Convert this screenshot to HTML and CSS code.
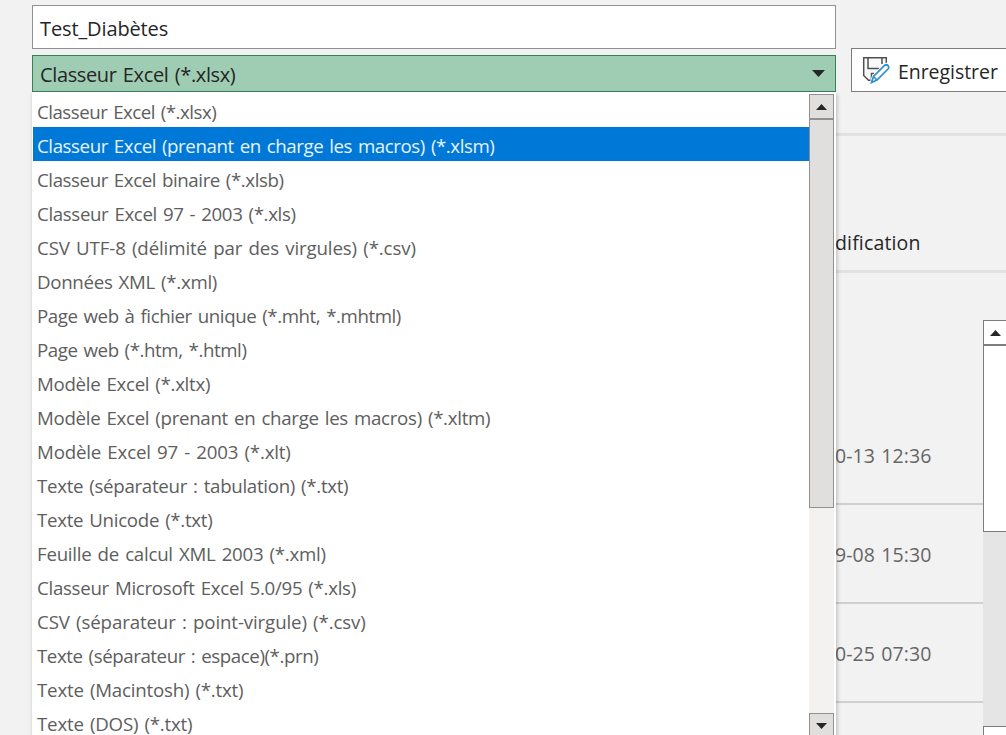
FILE: index.html
```html
<!DOCTYPE html>
<html lang="fr">
<head>
<meta charset="utf-8">
<title>Enregistrer sous</title>
<link rel="stylesheet" href="styles.css">
</head>
<body>
<main class="dialog">
  <section class="form">
    <div class="filename"><span>Test_Diabètes</span></div>
    <div class="combo"><span>Classeur Excel (*.xlsx)</span><svg class="combo-arrow" width="13" height="7" viewBox="0 0 13 7"><path d="M0 0h13L6.500 7z"/></svg></div>
    <div class="dropdown">
      <ul class="options">
        <li><span>Classeur Excel (*.xlsx)</span></li>
        <li class="selected"><span>Classeur Excel (prenant en charge les macros) (*.xlsm)</span></li>
        <li><span>Classeur Excel binaire (*.xlsb)</span></li>
        <li><span>Classeur Excel 97 - 2003 (*.xls)</span></li>
        <li><span>CSV UTF-8 (délimité par des virgules) (*.csv)</span></li>
        <li><span>Données XML (*.xml)</span></li>
        <li><span>Page web à fichier unique (*.mht, *.mhtml)</span></li>
        <li><span>Page web (*.htm, *.html)</span></li>
        <li><span>Modèle Excel (*.xltx)</span></li>
        <li><span>Modèle Excel (prenant en charge les macros) (*.xltm)</span></li>
        <li><span>Modèle Excel 97 - 2003 (*.xlt)</span></li>
        <li><span>Texte (séparateur : tabulation) (*.txt)</span></li>
        <li><span>Texte Unicode (*.txt)</span></li>
        <li><span>Feuille de calcul XML 2003 (*.xml)</span></li>
        <li><span>Classeur Microsoft Excel 5.0/95 (*.xls)</span></li>
        <li><span>CSV (séparateur : point-virgule) (*.csv)</span></li>
        <li><span>Texte (séparateur : espace)(*.prn)</span></li>
        <li><span>Texte (Macintosh) (*.txt)</span></li>
        <li><span>Texte (DOS) (*.txt)</span></li>
      </ul>
      <div class="scrollbar">
        <div class="scroll-button"><svg width="11" height="6" viewBox="0 0 11 6"><path d="M0 6h11L5.500 0z"/></svg></div>
        <div class="thumb"></div>
        <div class="track"></div>
        <div class="scroll-button last"><svg width="11" height="6" viewBox="0 0 11 6"><path d="M0 0h11L5.500 6z"/></svg></div>
      </div>
    </div>
  </section>
  <section class="side">
    <div class="toolbar">
      <div class="save">
        <svg class="save-icon" width="28" height="28" viewBox="0 0 28 28">
          <path d="M1.700 1.700H24.300V20L20 24.500H7L1.700 20z" fill="#fafafa"/>
          <path d="M24.300 7V1.700H1.700V19.500L6.500 24.300H9M6 2V12.500H17M20 2V8M9.500 23V17.500H12" stroke="#505050" stroke-width="1.500"/>
          <path d="M10 26.500L11.800 20.500L22.500 9.800Q24.300 8.200 26 9.600Q27.600 11.300 26 13L15.200 23.800z" fill="#fff" stroke="#fff" stroke-width="4"/>
          <path d="M9.500 26.500L11.500 20.500L22.500 9.500Q24.300 8 26 9.500Q27.500 11.200 26 13L15 24zM11.500 20.500L15 24" fill="#fff" stroke="#2b8fd6" stroke-width="1.700"/>
        </svg>
        <span>Enregistrer</span>
      </div>
    </div>
    <div class="column-head"><span>dification</span></div>
    <div class="files">
      <div class="rows">
        <div class="file"><span>0-13 12:36</span></div>
        <div class="file"><span>9-08 15:30</span></div>
        <div class="file"><span>0-25 07:30</span></div>
      </div>
      <div class="page-scroll">
        <div class="page-button"><svg width="11" height="6" viewBox="0 0 11 6"><path d="M0 6h11L5.500 0z"/></svg></div>
        <div class="page-thumb"></div>
        <div class="page-track"></div>
        <div class="page-end"></div>
      </div>
    </div>
  </section>
</main>
</body>
</html>
```
FILE: styles.css
```css
* { box-sizing: border-box; }
body {
  margin: 0;
  background: #f2f2f2;
  color: #262626;
  font-family: "Open Sans", "Noto Sans", sans-serif;
  font-size: 19.500px;
}
svg { display: block; fill: #262626; }
span { white-space: pre; }
.dialog { display: flex; width: 1006px; height: 735px; overflow: hidden; }
.form {
  display: flex;
  flex-direction: column;
  flex: none;
  width: 836px;
  padding: 5px 0 0 32px;
}
.filename {
  flex: none;
  height: 44px;
  padding-left: 7px;
  border: 1px solid #919191;
  background: #fff;
  font-size: 20px;
  line-height: 45px;
  letter-spacing: -.12px;
}
.combo {
  display: flex;
  flex: none;
  justify-content: space-between;
  height: 37px;
  margin-top: 6px;
  padding: 0 10px 0 7px;
  border: 1px solid #398057;
  background: #9fcdb3;
  font-size: 20px;
  line-height: 37px;
  letter-spacing: -.37px;
  word-spacing: 1.500px;
}
.combo-arrow { margin-top: 14px; }
.dropdown {
  display: flex;
  flex: none;
  height: 660px;
  padding: 1px 2px 0 1px;
  background: #fff;
  box-shadow: 1px 2px 4px rgba(0, 0, 0, .25);
  z-index: 1;
}
.options {
  flex: 1;
  margin: 0;
  padding: 0;
  list-style: none;
  color: #5e5e5e;
  font-size: 18.700px;
  letter-spacing: -.3px;
  word-spacing: 1.500px;
}
.options li { height: 34px; padding-left: 4px; line-height: 38px; }
.options li:nth-child(1) { letter-spacing: -.5px; }
.options li:nth-child(2),
.options li:nth-child(3),
.options li:nth-child(7),
.options li:nth-child(8),
.options li:nth-child(17) { letter-spacing: -.42px; }
.options li:nth-child(4) { letter-spacing: -.36px; }
.options li:nth-child(5),
.options li:nth-child(16) { letter-spacing: -.12px; }
.options li:nth-child(11) { letter-spacing: -.17px; }
.options li:nth-child(14) { letter-spacing: -.25px; }
.options li:nth-child(n+18) { letter-spacing: -.2px; }
.options .selected { background: #0078d7; color: #e8f2fb; }
.scrollbar {
  display: flex;
  flex-direction: column;
  width: 25px;
  height: 646px;
  padding-top: 1px;
}
.scroll-button {
  display: grid;
  place-items: center;
  flex: none;
  height: 25px;
  border: 1px solid #919191;
  background: #e0dfdd;
}
.scroll-button.last { height: 26px; }
.thumb { height: 389px; flex: none; border: 1px solid #919191; background: #e0dfdd; }
.track { flex: 1; background: #f3f2f1; }
.side { display: flex; flex-direction: column; flex: 1; min-width: 0; }
.toolbar { height: 136px; flex: none; padding: 48px 0 0 15px; border-bottom: 3px solid #e1e1e1; }
.save {
  display: flex;
  height: 44px;
  padding-left: 10px;
  border: 1px solid #7d7d7d;
  border-right: 0;
  background: #fff;
  line-height: 45px;
}
.save-icon { flex: none; margin: 7px 8px 0 0; fill: none; }
.save span { letter-spacing: -.05px; }
.column-head {
  height: 137px;
  flex: none;
  padding-top: 90px;
  border-bottom: 3px solid #e1e1e1;
  line-height: 34px;
  letter-spacing: .15px;
  text-indent: -1px;
}
.files { display: flex; flex: 1; }
.rows { flex: 1; padding-top: 133px; color: #666; text-indent: -1px; letter-spacing: .1px; word-spacing: 1px; }
.file { height: 99px; border-bottom: 2px solid #d0d0d0; line-height: 99px; }
.page-scroll { display: flex; flex-direction: column; width: 23px; padding-top: 47px; overflow: hidden; }
.page-button {
  display: grid;
  place-items: center;
  flex: none;
  width: 25px;
  height: 25px;
  border: 1px solid #7d7d7d;
  background: #fff;
}
.page-thumb { height: 187px; flex: none; border: 1px solid #7d7d7d; border-right: 0; background: #fff; }
.page-track { flex: 1; background: #e5e5e5; }
.page-end { height: 9px; border: solid #7d7d7d; border-width: 1px 0 0 1px; background: #fff; }
```
